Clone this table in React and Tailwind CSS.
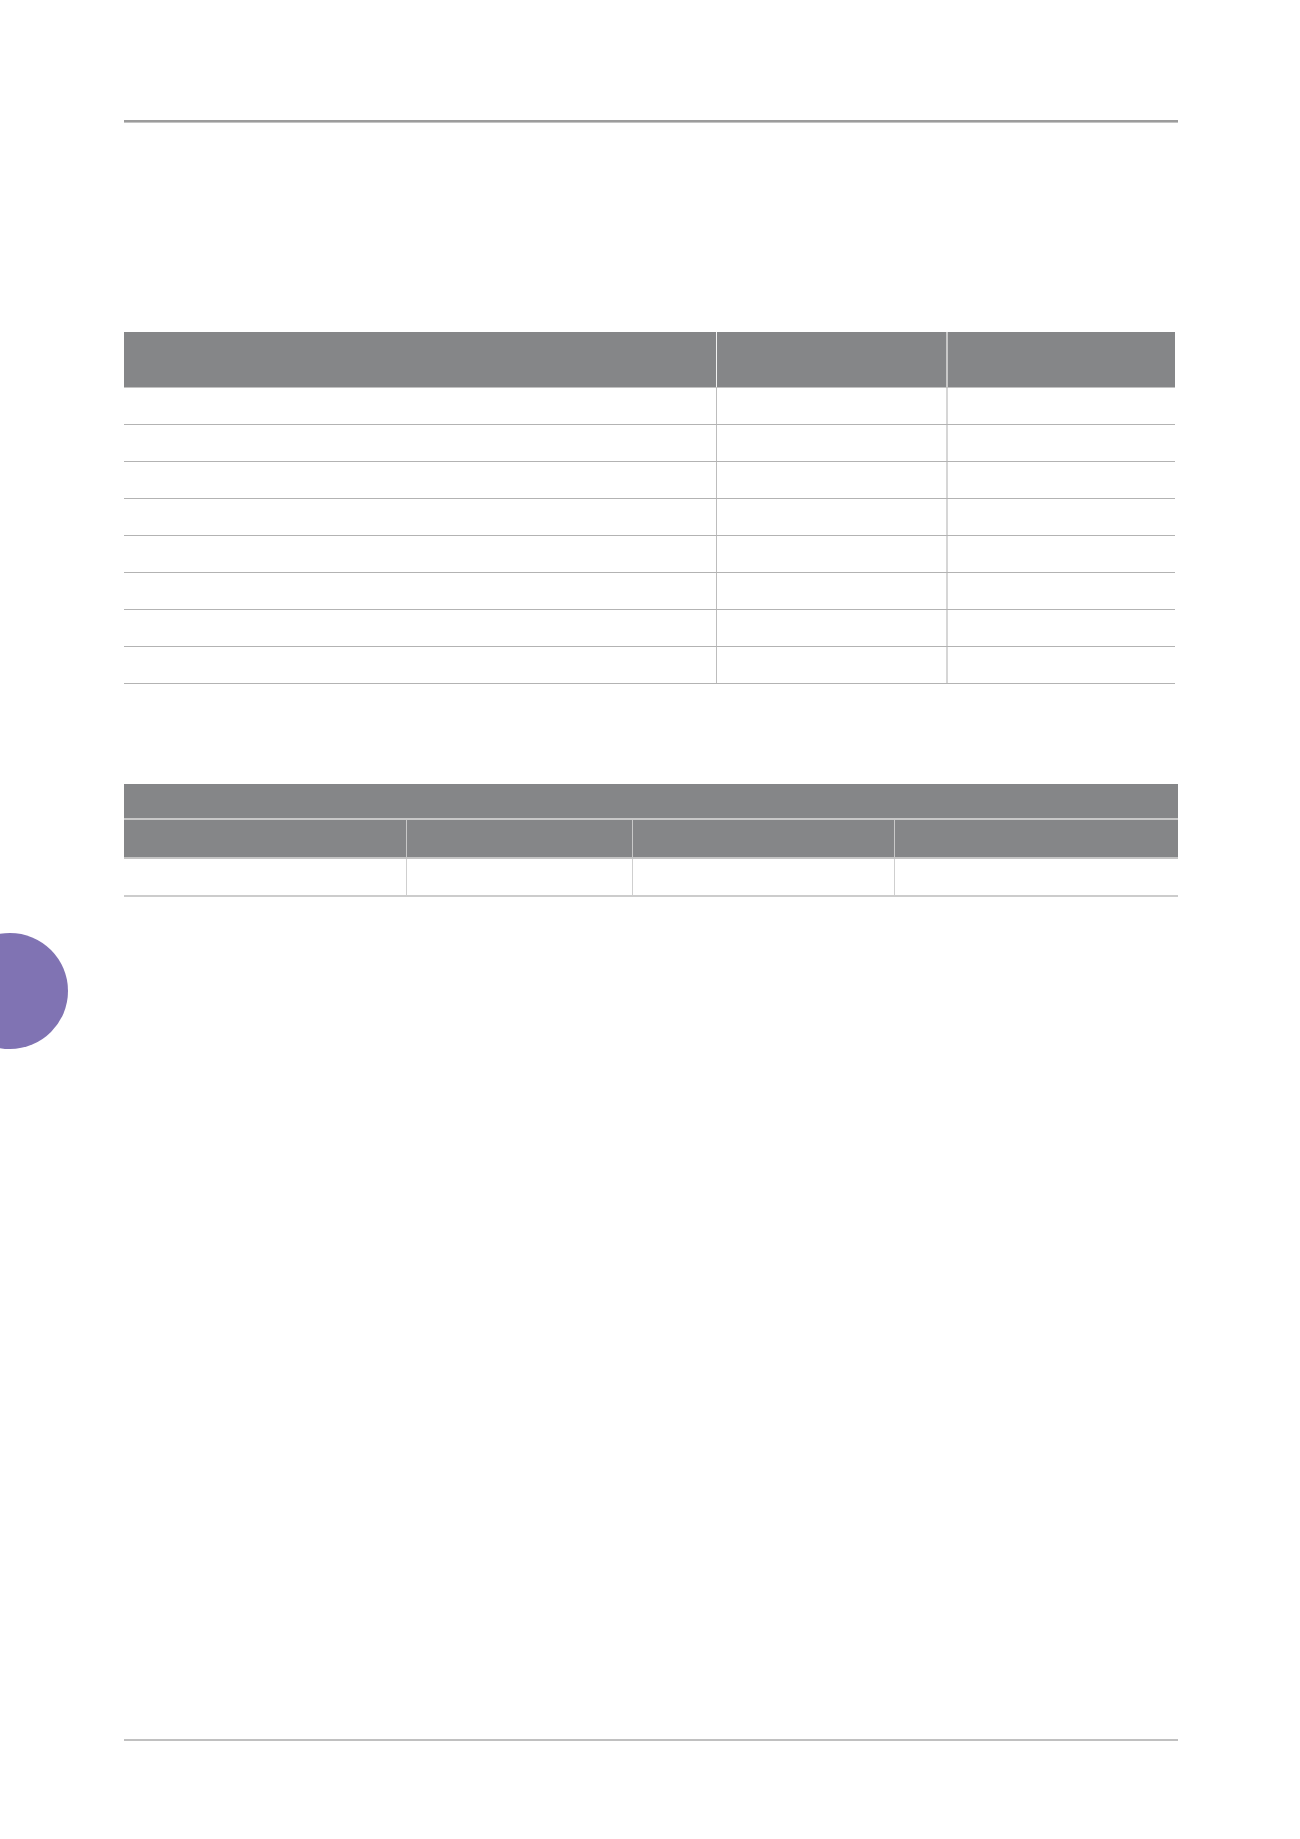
import React from 'react';

const rows = [1, 2, 3, 4, 5, 6, 7, 8];

const App = () => {
  return (
    <div className="relative w-[1300px] h-[1839px] bg-white overflow-hidden font-['Liberation_Sans',sans-serif]">
      {/* side tab circle */}
      <div className="absolute left-[-48px] top-[933px] w-[116px] h-[116px] rounded-full bg-[#8073b3]" />

      <div className="flex flex-col pl-[124px] pt-[120px]">
        {/* top rule */}
        <div className="w-[1054px] h-[3px] bg-[#9c9c9c] border-b border-[#c4c4c4]" />

        {/* Table 1 */}
        <div className="mt-[209px] w-[1051px] flex flex-col">
          <div className="flex h-[56px] bg-[#858688] border-b border-[#c2c2c2]">
            <div className="w-[592px]" />
            <div className="w-[230px] border-l border-[#f2f2f2]" />
            <div className="flex-1 border-l-2 border-[#c8c8c8]" />
          </div>
          {rows.map((r) => (
            <div key={r} className="flex h-[37px] border-b border-[#b3b3b3]">
              <div className="w-[592px]" />
              <div className="w-[230px] border-l border-[#bdbdbd]" />
              <div className="flex-1 border-l-2 border-[#d6d6d6]" />
            </div>
          ))}
        </div>

        {/* Table 2 */}
        <div className="mt-[100px] w-[1054px] flex flex-col">
          <div className="h-[36px] bg-[#858688] border-b-2 border-[#c8c8c8]" />
          <div className="flex h-[39px] bg-[#858688] border-b-2 border-[#c4c4c4]">
            <div className="w-[282px]" />
            <div className="w-[226px] border-l border-[#c8c8c8]" />
            <div className="w-[262px] border-l border-[#c8c8c8]" />
            <div className="flex-1 border-l border-[#c8c8c8]" />
          </div>
          <div className="flex h-[38px] border-b-2 border-[#cccccc]">
            <div className="w-[282px]" />
            <div className="w-[226px] border-l border-[#cfcfcf]" />
            <div className="w-[262px] border-l border-[#cfcfcf]" />
            <div className="flex-1 border-l border-[#cfcfcf]" />
          </div>
        </div>

        {/* bottom rule */}
        <div className="mt-[842px] w-[1054px] h-[2px] bg-[#c0c0c0]" />
      </div>
    </div>
  );
};

export default App;
